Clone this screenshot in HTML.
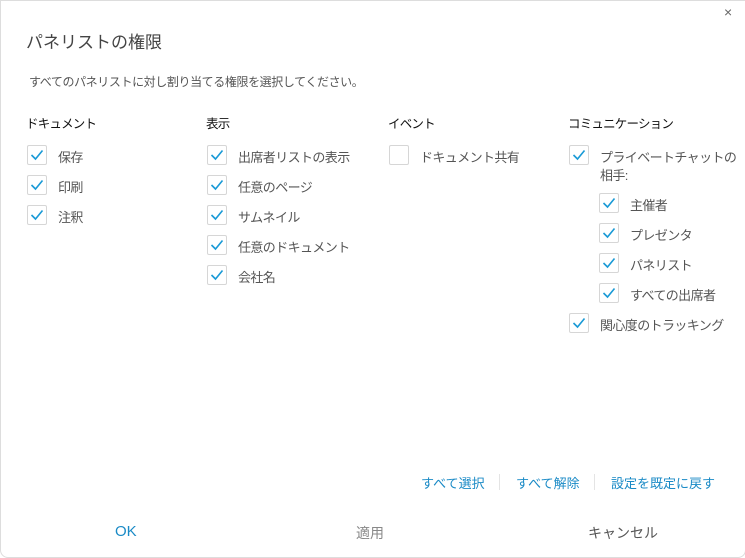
<!DOCTYPE html><html><head><meta charset="utf-8"><style>
body{margin:0;width:745px;height:557px;background:#fff;font-family:"Liberation Sans","Noto Sans CJK JP",sans-serif;position:relative;overflow:hidden}
.a{position:absolute;white-space:nowrap}
.cb{position:absolute;width:18px;height:18px;border:1px solid #d6d6d6;border-radius:2px;background:#fff}
.cb svg{position:absolute;left:2px;top:3px}
.t{font-size:13px;letter-spacing:-0.6px;color:#555}
.h{font-size:12.5px;letter-spacing:-0.8px;color:#111}
.l{font-size:13px;color:#1a8ac6}
</style></head><body>
<div class="a" style="left:0;top:0;width:744px;height:556px;border:1px solid #ddd;border-radius:0 0 8px 8px"></div>
<div class="a" style="left:724px;top:4px;font-size:14px;color:#666">×</div>
<div class="a" style="left:26px;top:28px;font-size:17px;color:#444">パネリストの権限</div>
<div class="a" style="left:29px;top:73px;font-size:12px;letter-spacing:-0.4px;color:#555">すべてのパネリストに対し割り当てる権限を選択してください。</div>
<div class="a h" style="left:26px;top:113px">ドキュメント</div>
<div class="a h" style="left:206px;top:113px">表示</div>
<div class="a h" style="left:388px;top:113px">イベント</div>
<div class="a h" style="left:568px;top:113px">コミュニケーション</div>
<div id="c"></div>
<div class="a l" style="left:421px;top:473px">すべて選択</div>
<div class="a" style="left:499px;top:474px;width:1px;height:16px;background:#e4e4e4"></div>
<div class="a l" style="left:516px;top:473px">すべて解除</div>
<div class="a" style="left:594px;top:474px;width:1px;height:16px;background:#e4e4e4"></div>
<div class="a l" style="left:611px;top:473px">設定を既定に戻す</div>
<div class="a" style="left:115px;top:523px;font-size:15px;color:#1a8ac6">OK</div>
<div class="a" style="left:356px;top:523px;font-size:14px;color:#888">適用</div>
<div class="a" style="left:588px;top:523px;font-size:14px;color:#555">キャンセル</div>
<script>
var items=[[27,145,"保存",1],[27,175,"印刷",1],[27,205,"注釈",1],
[207,145,"出席者リストの表示",1],[207,175,"任意のページ",1],[207,205,"サムネイル",1],[207,235,"任意のドキュメント",1],[207,265,"会社名",1],
[389,145,"ドキュメント共有",0],[569,145,"プライベートチャットの",1],
[599,193,"主催者",1],[599,223,"プレゼンタ",1],[599,253,"パネリスト",1],[599,283,"すべての出席者",1],[569,313,"関心度のトラッキング",1]];
var h="";items.forEach(function(i){h+='<div class="cb" style="left:'+i[0]+'px;top:'+i[1]+'px">'+(i[3]?'<svg width="14" height="12"><path d="M1.5 6 L5.5 10 L12.5 1.5" fill="none" stroke="#1a9ad6" stroke-width="1.6"/></svg>':'')+'</div><div class="a t" style="left:'+(i[0]+31)+'px;top:'+(i[1]+2)+'px">'+i[2]+'</div>';});
h+='<div class="a t" style="left:600px;top:165px">相手:</div>';
document.getElementById("c").innerHTML=h;
</script>
</body></html>
